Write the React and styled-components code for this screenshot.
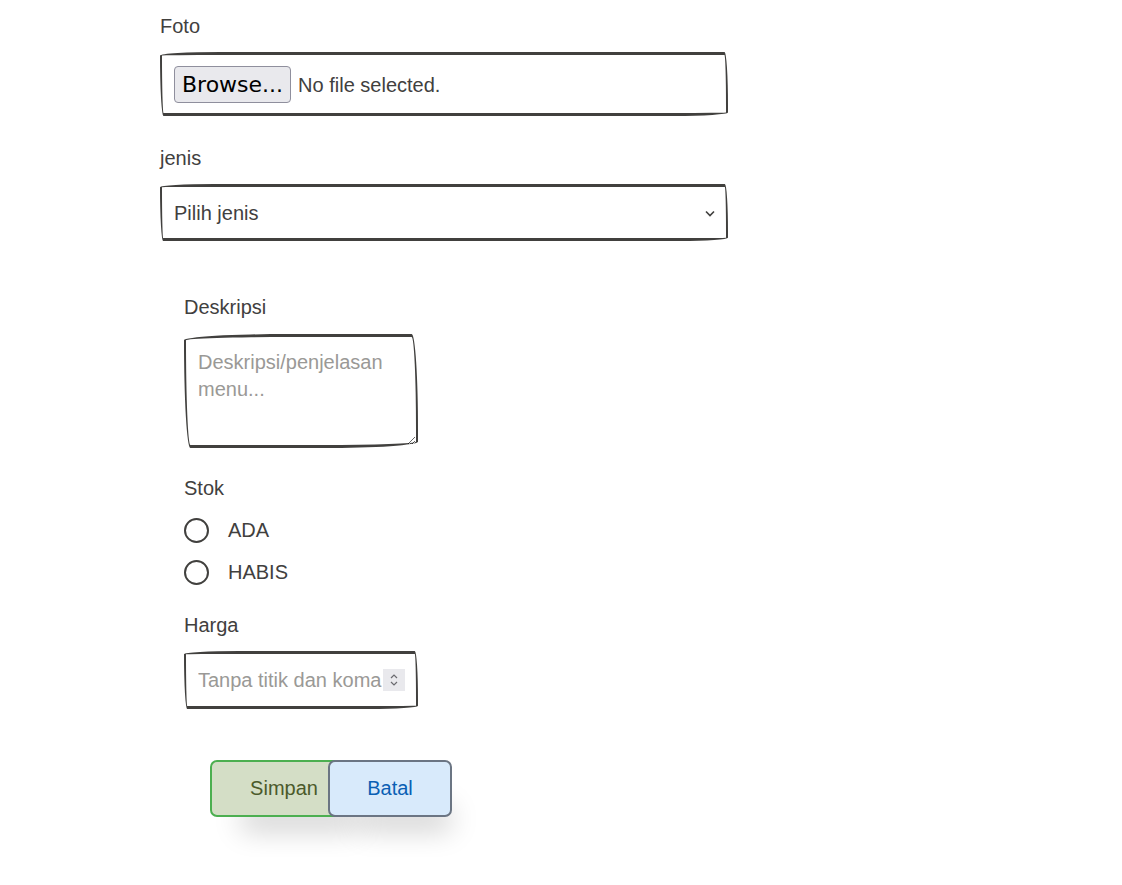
import React, { useState } from "react";
import styled, { createGlobalStyle } from "styled-components";

const ink = "#41403e";
const sketchy = "255px 15px 225px 15px / 15px 225px 15px 255px";

const GlobalStyle = createGlobalStyle`
  html, body {
    margin: 0;
    padding: 0;
    background: #fff;
  }
  body {
    font-family: "Liberation Sans", Arial, sans-serif;
    color: ${ink};
  }
`;

const Page = styled.form`
  padding: 14px 0 40px 160px;
  width: 568px;
`;

const FieldLabel = styled.label`
  display: block;
  font-size: 20px;
  line-height: 24px;
  color: ${ink};
  margin-bottom: ${(p) => p.$gap || 14}px;
`;

const SketchBox = styled.div`
  box-sizing: border-box;
  display: flex;
  align-items: center;
  width: ${(p) => p.$width || "100%"};
  height: ${(p) => p.$height}px;
  border: solid ${ink};
  border-width: 3px 2px;
  border-radius: ${sketchy};
  background: #fff;
  margin-bottom: ${(p) => p.$after || 0}px;
  padding: 0 12px;
`;

const BrowseButton = styled.label`
  box-sizing: border-box;
  height: 37px;
  padding: 0 7px;
  display: flex;
  align-items: center;
  font-family: "DejaVu Sans", sans-serif;
  font-size: 22px;
  color: #000;
  background: #e9e9ed;
  border: 1px solid #8f8f9d;
  border-radius: 4px;
  cursor: pointer;
  input {
    display: none;
  }
`;

const FileName = styled.span`
  font-size: 20px;
  margin-left: 7px;
  margin-top: 3px;
`;

const Select = styled.select`
  flex: 1;
  appearance: none;
  border: none;
  outline: none;
  background: transparent;
  font-family: inherit;
  font-size: 20px;
  color: ${ink};
  padding: 0;
`;

const Chevron = styled.svg`
  width: 12px;
  height: 12px;
  margin-right: -2px;
  pointer-events: none;
`;

const Group = styled.div`
  padding-left: 24px;
  padding-top: 54px;
`;

const TextArea = styled.textarea`
  box-sizing: border-box;
  display: block;
  width: 234px;
  height: 114px;
  border: solid ${ink};
  border-width: 3px 2px;
  border-radius: ${sketchy};
  padding: 12px;
  font-family: inherit;
  font-size: 20px;
  line-height: 27px;
  color: ${ink};
  outline: none;
  margin-bottom: 28px;
  &::placeholder {
    color: #9a9996;
  }
`;

const RadioList = styled.div`
  margin-top: -5px;
  margin-bottom: 20px;
`;

const RadioRow = styled.label`
  display: flex;
  align-items: center;
  height: 42px;
  font-size: 20px;
  cursor: pointer;
  input {
    display: none;
  }
`;

const RadioDot = styled.span`
  box-sizing: border-box;
  width: 25px;
  height: 25px;
  border: 2px solid ${ink};
  border-radius: 50%;
  margin-right: 19px;
  display: flex;
  align-items: center;
  justify-content: center;
  &::after {
    content: "";
    width: 11px;
    height: 11px;
    border-radius: 50%;
    background: ${(p) => (p.$checked ? ink : "transparent")};
  }
`;

const NumberInput = styled.input`
  flex: 1;
  min-width: 0;
  border: none;
  outline: none;
  background: transparent;
  font-family: inherit;
  font-size: 20px;
  color: ${ink};
  padding: 0;
  &::placeholder {
    color: #9a9996;
  }
`;

const Spinner = styled.span`
  width: 22px;
  height: 22px;
  background: #e9e9ed;
  display: flex;
  align-items: center;
  justify-content: center;
  margin-right: -1px;
`;

const Actions = styled.div`
  display: flex;
  margin-top: 51px;
  padding-left: 26px;
`;

const Button = styled.button`
  position: relative;
  box-sizing: border-box;
  width: ${(p) => p.$width}px;
  height: 57px;
  margin-left: ${(p) => p.$overlap || 0}px;
  font-family: inherit;
  font-size: 20px;
  color: ${(p) => p.$text};
  background: ${(p) => p.$bg};
  border: 2px solid ${(p) => p.$border};
  border-radius: 7px;
  box-shadow: 15px 30px 28px -16px rgba(0, 0, 0, 0.18);
  cursor: pointer;
`;

function App() {
  const [stok, setStok] = useState("");

  return (
    <>
      <GlobalStyle />
      <Page onSubmit={(e) => e.preventDefault()}>
        <FieldLabel>Foto</FieldLabel>
        <SketchBox $height={64} $after={30}>
          <BrowseButton>
            Browse...
            <input type="file" />
          </BrowseButton>
          <FileName>No file selected.</FileName>
        </SketchBox>

        <FieldLabel>jenis</FieldLabel>
        <SketchBox $height={57}>
          <Select defaultValue="">
            <option value="">Pilih jenis</option>
            <option value="makanan">Makanan</option>
            <option value="minuman">Minuman</option>
          </Select>
          <Chevron viewBox="0 0 12 12">
            <path d="M2 4.5 L6 8.5 L10 4.5" fill="none" stroke={ink} strokeWidth="1.6" />
          </Chevron>
        </SketchBox>

        <Group>
          <FieldLabel $gap={15}>Deskripsi</FieldLabel>
          <TextArea placeholder="Deskripsi/penjelasan menu..." />

          <FieldLabel>Stok</FieldLabel>
          <RadioList>
            {["ADA", "HABIS"].map((opt) => (
              <RadioRow key={opt}>
                <input
                  type="radio"
                  name="stok"
                  checked={stok === opt}
                  onChange={() => setStok(opt)}
                />
                <RadioDot $checked={stok === opt} />
                {opt}
              </RadioRow>
            ))}
          </RadioList>

          <FieldLabel>Harga</FieldLabel>
          <SketchBox $width="234px" $height={58}>
            <NumberInput type="text" inputMode="numeric" placeholder="Tanpa titik dan koma" />
            <Spinner>
              <svg width="10" height="14" viewBox="0 0 10 14">
                <path d="M2 5 L5 2 L8 5 M2 9 L5 12 L8 9" fill="none" stroke="#6b6b70" strokeWidth="1.2" />
              </svg>
            </Spinner>
          </SketchBox>

          <Actions>
            <Button type="submit" $width={148} $bg="#d4dec6" $border="#4caf50" $text="#4b5a2b">
              Simpan
            </Button>
            <Button type="button" $width={124} $overlap={-30} $bg="#d8eafb" $border="#6b7583" $text="#0a5fb4">
              Batal
            </Button>
          </Actions>
        </Group>
      </Page>
    </>
  );
}

export default App;
